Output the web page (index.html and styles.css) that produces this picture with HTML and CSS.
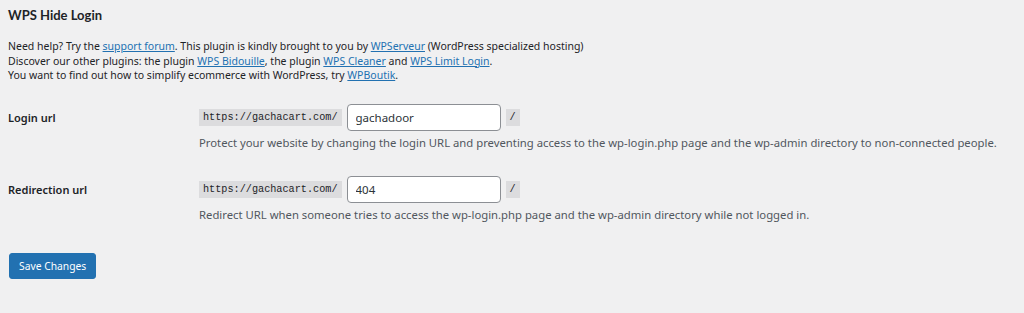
FILE: index.html
```html
<!DOCTYPE html>
<html lang="en">
<head>
    <meta charset="UTF-8">
    <title>WPS Hide Login</title>
    <link rel="stylesheet" href="styles.css">
</head>
<body>
    <div class="wrap">
        <h2 class="title">WPS Hide Login</h2>
        <p class="intro">
            Need help? Try the <a href="#">support forum</a>. This plugin is kindly brought to you by <a href="#">WPServeur</a> (WordPress specialized hosting)<br>
            Discover our other plugins: the plugin <a href="#">WPS Bidouille</a>, the plugin <a href="#">WPS Cleaner</a> and <a href="#">WPS Limit Login</a>.<br>
            You want to find out how to simplify ecommerce with WordPress, try <a href="#">WPBoutik</a>.
        </p>

        <form class="form-table">
            <div class="row">
                <label class="row-label" for="login-url">Login url</label>
                <div class="row-field">
                    <div class="url-line">
                        <code>https://gachacart.com/</code>
                        <input type="text" id="login-url" value="gachadoor">
                        <code class="slash">/</code>
                    </div>
                    <p class="description">Protect your website by changing the login URL and preventing access to the wp-login.php page and the wp-admin directory to non-connected people.</p>
                </div>
            </div>
            <div class="row">
                <label class="row-label" for="redirect-url">Redirection url</label>
                <div class="row-field">
                    <div class="url-line">
                        <code>https://gachacart.com/</code>
                        <input type="text" id="redirect-url" value="404">
                        <code class="slash">/</code>
                    </div>
                    <p class="description">Redirect URL when someone tries to access the wp-login.php page and the wp-admin directory while not logged in.</p>
                </div>
            </div>
            <button type="submit" class="button-primary">Save Changes</button>
        </form>
    </div>
</body>
</html>
```

FILE: styles.css
```css
* {
    box-sizing: border-box;
    margin: 0;
    padding: 0;
}

body {
    background-color: #f0f0f1;
    color: #1d2327;
    font-family: "Noto Sans", sans-serif;
    font-size: 11px;
}

.wrap {
    padding: 6px 8px 0 8px;
}

/* Heading and intro */
.title {
    font-family: Lato, sans-serif;
    font-size: 13px;
    font-weight: 700;
    line-height: 18px;
    margin-bottom: 15px;
}

.intro {
    font-size: 10.5px;
    line-height: 14.5px;
    margin-bottom: 9px;
}

a {
    color: #2271b1;
    text-decoration: underline;
}

/* Settings rows */
.row {
    display: grid;
    grid-template-columns: 191px 1fr;
    padding: 12px 0 14px 0;
}

.row-label {
    font-weight: 600;
    padding-top: 6px;
}

.url-line {
    display: flex;
    align-items: center;
    gap: 5px;
}

code {
    background-color: #dcdcde;
    font-family: "Liberation Mono", monospace;
    font-size: 10.2px;
    padding: 2px 4px;
    line-height: 13px;
}

.slash {
    padding: 2px 4px;
}

input {
    width: 154px;
    height: 27px;
    padding: 0 8px;
    border: 1px solid #8c8f94;
    border-radius: 4px;
    background: #fff;
    color: #2c3338;
    font-family: "Noto Sans", sans-serif;
    font-size: 11.5px;
}

.description {
    color: #50575e;
    font-size: 11.3px;
    margin-top: 5px;
    line-height: 14px;
}

/* Button */
.button-primary {
    margin: 17px 0 0 1px;
    height: 26px;
    padding: 0 9px;
    background-color: #2271b1;
    border: 1px solid #2271b1;
    border-radius: 3px;
    color: #fff;
    font-family: "Noto Sans", sans-serif;
    font-size: 10.3px;
    cursor: pointer;
}
```
